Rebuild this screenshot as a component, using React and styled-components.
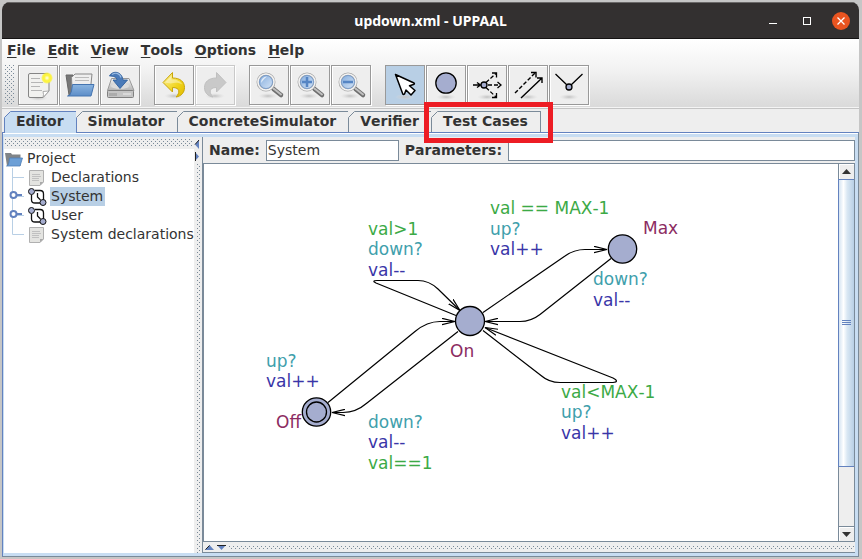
import React, { useState } from "react";
import styled, { createGlobalStyle, css } from "styled-components";

const ui = {
  steel: "#7a8a99",
  blue: "#6382bf",
  pale: "#c8ddf2",
  select: "#b8cfe5",
  panel: "#eeeeee",
  ink: "#333333",
};

const bumps = css`
  background-image: conic-gradient(from 270deg at 1px 1px, ${ui.steel} 90deg, transparent 0),
    conic-gradient(from 270deg at 1px 1px, ${ui.steel} 90deg, transparent 0);
  background-size: 4px 4px;
  background-position: 0 0, 2px 2px;
`;

const GlobalStyle = createGlobalStyle`
  * { box-sizing: border-box; }
  body {
    margin: 0;
    background: #c6c6c6;
    color: ${ui.ink};
    font: 14px/18px "DejaVu Sans", sans-serif;
    font-kerning: none;
  }
  button, input {
    font: inherit;
    font-kerning: none;
    color: inherit;
    padding: 0;
    margin: 0;
    border-radius: 0;
  }
`;

const Desktop = styled.div`
  height: 100vh;
  display: flex;
  padding: 2px 3px 2px 2px;
`;
const Window = styled.div`
  flex: 1;
  min-width: 0;
  display: flex;
  flex-direction: column;
  border-radius: 8px 8px 0 0;
  overflow: hidden;
  background: ${ui.panel};
`;

const TitleBar = styled.header`
  height: 37px;
  flex: none;
  display: grid;
  grid-template-columns: 1fr auto 1fr;
  align-items: center;
  padding: 0 9px;
  background: #333030;
  border-top: 1px solid #6a6868;
  border-bottom: 1px solid #151313;
  color: #fff;
`;
const Title = styled.h1`
  grid-column: 2;
  margin: 0;
  font: bold 14px/20px "Noto Sans", sans-serif;
`;
const WindowButtons = styled.div`
  display: flex;
  gap: 16px;
  justify-content: flex-end;
`;
const WindowButton = styled.button`
  width: 18px;
  height: 18px;
  border: 0;
  border-radius: 50%;
  background: ${(p) => (p.$close ? "#e95420" : "transparent")};
  svg { display: block; }
`;

const Chrome = styled.div`
  flex: none;
  background: linear-gradient(#ffffff, #f2f2f2 45%, #d9d9d9);
  box-shadow: inset 0 -1px 0 #f4f4f4;
  border-bottom: 1px solid #c4c4c4;
`;
const MenuBar = styled.nav`
  display: flex;
  gap: 12px;
  height: 25px;
  padding: 2px 5px 0;
`;
const MenuItem = styled.button`
  height: 18px;
  border: 0;
  background: none;
  font-weight: bold;
  line-height: 18px;
`;
const Hot = styled.span`
  text-decoration: underline;
  text-underline-offset: 2px;
  text-decoration-thickness: 1px;
`;
const Toolbar = styled.div`
  display: flex;
  gap: 14px;
  height: 44px;
  padding: 1px 3px 3px;
`;
const Grip = styled.div`
  width: 10px;
  height: 40px;
  margin-right: -11px;
  ${bumps}
`;
const ToolGroup = styled.div`
  display: flex;
  gap: 1px;
`;
const Tool = styled.button`
  width: 40px;
  height: 40px;
  border: 1px solid ${(p) => (p.disabled ? "#c9c9c9" : "#999999")};
  background: ${(p) => (p.$on ? ui.select : ui.panel)};
  box-shadow: ${(p) => (p.$on ? "1px 1px 0 #fff" : "1px 1px 0 #fff, inset 1px 1px 0 #fff")};
  svg { display: block; }
`;

const Tabs = styled.div`
  flex: none;
  display: flex;
  height: 24px;
  padding: 2px 2px 0 2px;
  border-bottom: 1px solid ${ui.blue};
`;
const Tab = styled.button`
  position: relative;
  height: ${(p) => (p.$on ? "22px" : "21px")};
  padding: ${(p) => (p.$on ? "0 12px 3px 11px" : "0 12px 2px 11px")};
  border: 1px solid ${(p) => (p.$on ? ui.blue : ui.steel)};
  border-bottom: 0;
  border-left-width: ${(p) => (p.$on ? "1px" : "0")};
  background: ${(p) => (p.$on ? ui.pale : ui.panel)};
  font-weight: bold;
  line-height: 18px;
  text-align: left;
`;
const CutCorner = styled.svg`
  position: absolute;
  left: -1px;
  top: -1px;
`;
const Highlight = styled.span`
  position: absolute;
  inset: -10px -13px -11px -8px;
  border: 5px solid #ed1c24;
  pointer-events: none;
  z-index: 2;
`;

const Content = styled.div`
  flex: 1;
  min-height: 0;
  display: grid;
  grid-template-columns: 190px 8px 1fr;
  padding: 4px 3px 3px 1px;
  background: ${ui.pale};
  border: solid ${ui.steel};
  border-width: 0 1px 1px 1px;
  border-left-color: ${ui.blue};
  box-shadow: inset 0 1px 0 #fff;
`;
const Sidebar = styled.aside`
  display: flex;
  flex-direction: column;
  min-height: 0;
  background: #fff;
`;
const SideGrip = styled.div`
  height: 12px;
  background-color: ${ui.panel};
  padding: 2px 1px;
  &::before {
    content: "";
    display: block;
    height: 8px;
    ${bumps}
  }
`;
const Divider = styled.div`
  display: flex;
  flex-direction: column;
  gap: 3px;
  padding-top: 3px;
  background: ${ui.panel};
  svg { display: block; flex: none; }
`;
const DividerBumps = styled.div`
  flex: 1;
  width: 4px;
  margin-left: 3px;
  ${bumps}
`;

const Tree = styled.ul`
  list-style: none;
  margin: 0;
  padding: 0;
`;
const TreeRow = styled.li`
  display: flex;
  align-items: center;
  height: 19px;
  white-space: nowrap;
`;
const Branch = styled.svg`
  flex: none;
  display: block;
`;
const NodeIcon = styled.svg`
  flex: none;
  display: block;
`;
const NodeLabel = styled.span`
  margin-left: 3px;
  padding: 0 2px 0 1px;
  line-height: 19px;
  background: ${(p) => (p.$on ? ui.select : "transparent")};
`;

const EditorPane = styled.main`
  display: flex;
  flex-direction: column;
  min-width: 0;
  min-height: 0;
  background: ${ui.panel};
  border-left: 1px solid ${ui.steel};
  border-bottom: 1px solid ${ui.steel};
`;
const Form = styled.form`
  flex: none;
  display: flex;
  align-items: center;
  height: 26px;
  padding-left: 6px;
`;
const FieldLabel = styled.label`
  font-weight: bold;
  margin-right: 6px;
`;
const Field = styled.input`
  height: 21px;
  min-width: 0;
  flex: ${(p) => (p.$grow ? "1" : "0 0 133px")};
  margin-right: ${(p) => (p.$grow ? "0" : "6px")};
  padding: 0 1px;
  border: 1px solid ${ui.steel};
  background: #fff;
  outline: 0;
`;
const CanvasRow = styled.div`
  flex: 1;
  min-height: 0;
  display: flex;
  background: #fff;
  border: 1px solid ${ui.steel};
  margin-bottom: 1px;
`;
const Canvas = styled.div`
  flex: 1;
  min-width: 0;
  overflow: hidden;
  svg { display: block; }
  text { font: 17px "DejaVu Sans", sans-serif; font-kerning: none; }
`;
const ScrollBar = styled.div`
  flex: none;
  width: 16px;
  display: flex;
  flex-direction: column;
  background: ${ui.panel};
  border-left: 1px solid ${ui.steel};
`;
const ScrollButton = styled.button`
  height: 15px;
  border: 0;
  background: ${ui.panel};
  box-shadow: inset 1px 1px 0 #fff;
  border-top: ${(p) => (p.$down ? `1px solid ${ui.steel}` : "0")};
  svg { display: block; margin: 0 auto; }
`;
const Track = styled.div`
  flex: 1;
  display: flex;
  flex-direction: column;
`;
const Thumb = styled.div`
  flex: 0 0 83%;
  display: flex;
  align-items: center;
  justify-content: center;
  margin-left: -1px;
  border: 1px solid ${ui.blue};
  border-right: 0;
  background: linear-gradient(90deg, #d5e4f2, #ffffff 30%, #d9e7f3 55%, #b8cfe5);
`;
const BottomDivider = styled.div`
  flex: none;
  display: flex;
  align-items: center;
  gap: 3px;
  height: 9px;
  padding-left: 2px;
  svg { display: block; flex: none; }
`;
const BottomBumps = styled.div`
  flex: 1;
  height: 4px;
  ${bumps}
`;

const Shadow = ({ cx = 19, cy = 31 }) => (
  <ellipse cx={cx} cy={cy} rx="10" ry="3" fill="url(#soft)" />
);

const GlyphPaints = () => (
  <svg width="0" height="0" aria-hidden="true">
    <defs>
      <radialGradient id="soft">
        <stop offset="0" stopColor="#c0c0c0" />
        <stop offset="1" stopColor="#dddddd" stopOpacity="0" />
      </radialGradient>
      <radialGradient id="sun">
        <stop offset="0" stopColor="#fffff0" />
        <stop offset="0.45" stopColor="#fcf440" />
        <stop offset="0.7" stopColor="#fcf340" />
        <stop offset="1" stopColor="#fff600" stopOpacity="0" />
      </radialGradient>
      <linearGradient id="folder" x2="0" y2="1">
        <stop offset="0" stopColor="#8ab4e0" />
        <stop offset="1" stopColor="#5c8dc8" />
      </linearGradient>
      <linearGradient id="lens" x2="1" y2="1">
        <stop offset="0" stopColor="#7fa9dc" />
        <stop offset="1" stopColor="#dce9f8" />
      </linearGradient>
      <linearGradient id="metal" x2="0" y2="1">
        <stop offset="0" stopColor="#f4f4f4" />
        <stop offset="1" stopColor="#b4b4b4" />
      </linearGradient>
      <linearGradient id="gold" x2="1" y2="1">
        <stop offset="0" stopColor="#fdf2a0" />
        <stop offset="0.6" stopColor="#f0d41c" />
        <stop offset="1" stopColor="#e0b800" />
      </linearGradient>
    </defs>
  </svg>
);

const Glyph = ({ children }) => (
  <svg width="38" height="38" viewBox="0 0 38 38" fill="none" aria-hidden="true">
    {children}
  </svg>
);

const NewIcon = () => (
  <Glyph>
    <Shadow cy={32} />
    <path d="M11 7.500h17q2 0 2 2V25l-6 6.500H11q-1.500 0-1.500-1.500V9q0-1.500 1.500-1.500Z" fill="#f1f1ef" stroke="#858585" />
    <path d="M30 25l-6 6.500q1-3 0-6Z" fill="#fff" stroke="#999" strokeWidth=".8" />
    <path d="M12 12.500h9M12 16.500h12M12 20.500h9M12 24.500h11" stroke="#b5b5b5" />
    <circle cx="28" cy="12" r="6" fill="url(#sun)" />
  </Glyph>
);
const OpenIcon = () => (
  <Glyph>
    <path d="M6 9h7l1 2h14v18H9Z" fill="#777" stroke="#666" />
    <path d="M11.500 11.500 15 8h17l-1.500 15H12Z" fill="#eee" stroke="#888" />
    <path d="M15 11.500h14M15 14.500h14" stroke="#bbb" />
    <path d="M12.500 18.500h21.500l-3 11.500H7.500q3 0 4-5Z" fill="url(#folder)" stroke="#4474b0" />
  </Glyph>
);
const SaveIcon = () => (
  <Glyph>
    <path d="M10.500 12.500h17.500l5 12H6.500Z" fill="url(#metal)" stroke="#999" />
    <ellipse cx="19" cy="20" rx="9" ry="3" fill="#dcdcdc" />
    <rect x="6.500" y="24.500" width="26" height="7" rx="1" fill="#c4c4c4" stroke="#808080" />
    <path d="M9 27v3M11 27v3M13 27v3M15 27v3" stroke="#888" strokeWidth=".8" />
    <path d="M22 28h8" stroke="#eee" />
    <path d="M8.500 10c2-5 12-6 13.500 4h4.500L19 22.500 12 14h4c0-3-4-4-7.500-4Z" fill="#4a7ab8" stroke="#30609c" strokeWidth=".9" />
    <path d="M11 8.500c4-2.500 8-1 9 3" stroke="#9dbde2" strokeWidth="1.200" />
  </Glyph>
);
const turn = "M8 16.500 17.500 6.500v5.500c8 0 12 4 12 9.500 0 5-3 8.500-8.500 9.500 4-4 4.500-9.500-3.500-9.500V26Z";
const UndoIcon = () => (
  <Glyph>
    <Shadow cy={30} />
    <path d={turn} fill="url(#gold)" stroke="#c9a60a" />
    <path d="M10 16.500l6.500-7v4c6 0 9 2 11 5-4-2-7-2-12-1Z" fill="#fff" opacity=".4" />
  </Glyph>
);
const RedoIcon = () => (
  <Glyph>
    <Shadow cy={30} />
    <path d={turn} transform="translate(38 0) scale(-1 1)" fill="#c9c9c9" stroke="#c0c0c0" />
  </Glyph>
);
const ZoomIcon = ({ sign }) => (
  <Glyph>
    <Shadow cx={18} cy={30} />
    <path d="M23.500 23 31 29" stroke="#6f6f6f" strokeWidth="4.500" strokeLinecap="round" />
    <path d="M23.500 22.500 31 28.500" stroke="#c0c0c0" strokeWidth="2" strokeLinecap="round" />
    <circle cx="16" cy="16" r="8" fill="url(#lens)" stroke="#aaa" strokeWidth="3" />
    <circle cx="16" cy="16" r="8" stroke="#f4f4f4" strokeWidth="1.500" />
    <circle cx="16" cy="16" r="6.500" stroke="#6c96cc" strokeWidth=".8" />
    {!sign && <path d="M11 17q0-6 6-6.500-3 2-6 6.500Z" fill="#fff" opacity=".7" />}
    {sign && <path d="M11 16h10" stroke="#5585c4" strokeWidth="2.500" />}
    {sign === "+" && <path d="M16 11v10" stroke="#5585c4" strokeWidth="2.500" />}
  </Glyph>
);
const PointerIcon = () => (
  <Glyph>
    <Shadow cy={31} />
    <path
      d="M9.500 8.500 28 17q1 1-.5 1.500l-4 1.200 5.500 4.800-4 4.500-5-5-1.500 4q-1 1-1.700 0Z"
      fill="#fff" stroke="#000" strokeWidth="1.500" strokeLinejoin="round"
    />
  </Glyph>
);
const LocationIcon = () => (
  <Glyph>
    <Shadow cy={31} />
    <circle cx="19" cy="17" r="10.200" fill="#a5adcf" stroke="#000" strokeWidth="1.300" />
  </Glyph>
);
const BranchIcon = () => (
  <Glyph>
    <Shadow cy={31} />
    <g stroke="#000" strokeWidth="1.300">
      <path d="M5 19h7M9 16.500l3.500 2.500L9 21.500M29.500 16l3.500 3-3.500 3M24 7h4.500v4.500M24 31.500h4.500V27" />
      <path d="M20 19h12M18 16.500 28 7.500M18 21.500 28 31" strokeDasharray="4 2" />
      <circle cx="16" cy="19" r="3" fill="#a5adcf" />
    </g>
  </Glyph>
);
const EdgeIcon = () => (
  <Glyph>
    <Shadow cy={31} />
    <g stroke="#000" strokeWidth="1.400">
      <path d="M6 27 26 7" strokeDasharray="4 2" />
      <path d="M22 6.500h5v5M12 32 33 12M28 12h5v5" />
    </g>
  </Glyph>
);
const NailIcon = () => (
  <Glyph>
    <Shadow cy={31} />
    <g stroke="#000" strokeWidth="1.300">
      <path d="M5.500 8 17 19M21 19 32.500 8" />
      <circle cx="19" cy="21" r="3" fill="#a5adcf" />
    </g>
  </Glyph>
);

const toolGroups = [
  [["New", NewIcon], ["Open", OpenIcon], ["Save", SaveIcon]],
  [["Undo", UndoIcon], ["Redo", RedoIcon]],
  [["Zoom to fit", ZoomIcon], ["Zoom in", ZoomIcon, "+"], ["Zoom out", ZoomIcon, "-"]],
  [["Select", PointerIcon], ["Add location", LocationIcon], ["Add branch point", BranchIcon], ["Add edge", EdgeIcon], ["Add nail", NailIcon]],
];

const FolderIcon = () => (
  <NodeIcon width="19" height="18" viewBox="0 0 19 18">
    <path d="M1 3h6l1 1.500h8.500V16H3Z" fill="#808488" />
    <path d="M5.500 8H18.500l-2.500 8H2.500q2 0 2.500-4Z" fill="#6c9fd6" stroke="#4f7fb8" strokeWidth=".8" />
  </NodeIcon>
);
const PageIcon = () => (
  <NodeIcon width="19" height="18" viewBox="0 0 19 18">
    <path d="M1.500 1.500h14V13L12 16.500H1.500Z" fill="#e4e4e1" stroke="#b0b0b0" />
    <path d="M4 5.500h8M4 7.500h9M4 9.500h7M4 11.500h7" stroke="#c0c0c0" />
    <path d="M15.500 13 12 16.500V13Z" fill="#aaa" />
  </NodeIcon>
);
const TemplateIcon = () => (
  <NodeIcon width="19" height="18" viewBox="0 0 19 18" fill="none" stroke="#111">
    <path d="M7 2.500h5q3.500 0 3.500 3.500v6M3.500 7v5q0 3 3.500 3h5" strokeWidth="1.300" />
    <path d="M9.500 5v4l3 3" strokeWidth="1.300" />
    <circle cx="3.500" cy="3.500" r="3" fill="#a5adcf" />
    <circle cx="15" cy="14.500" r="3" fill="#a5adcf" />
  </NodeIcon>
);

const nodes = [
  { name: "Declarations", Icon: PageIcon },
  { name: "System", Icon: TemplateIcon, handle: true },
  { name: "User", Icon: TemplateIcon, handle: true },
  { name: "System declarations", Icon: PageIcon, last: true },
];

const TreeBranch = ({ handle, last }) => (
  <Branch width="24" height="19" viewBox="0 0 24 19" fill="none">
    <path d={last ? "M8.500 0V9.500H20" : "M8.500 0V19M8.500 9.500H20"} stroke={ui.select} />
    {handle && (
      <g stroke={ui.blue} strokeWidth="2">
        <path d="M12 8h6" />
        <circle cx="9.500" cy="8" r="3" fill="#fff" />
      </g>
    )}
  </Branch>
);

const colors = { guard: "#3caa46", sync: "#3fa0ac", update: "#3a36a8", name: "#8c2c62" };
const labels = [
  [368, 235, "guard", "val>1"], [368, 255, "sync", "down?"], [368, 276, "update", "val--"],
  [490, 214, "guard", "val == MAX-1"], [490, 235, "sync", "up?"], [490, 255, "update", "val++"],
  [593, 285, "sync", "down?"], [593, 306, "update", "val--"],
  [266, 367, "sync", "up?"], [266, 387, "update", "val++"],
  [368, 428, "sync", "down?"], [368, 448, "update", "val--"], [368, 469, "guard", "val==1"],
  [561, 398, "guard", "val<MAX-1"], [561, 418, "sync", "up?"], [561, 439, "update", "val++"],
  [643, 234, "name", "Max"], [450, 357, "name", "On"], [276, 428, "name", "Off"],
];
const edges = [
  "M328 402.500 415 331.500Q427 321.500 440 321.500H455",
  "M458 331.500 367 403Q356 412.500 343 412.500H332",
  "M456 315.500 376 283Q371 280.500 377 280.500H418Q429 280.500 438 289L460 310.500",
  "M483 312.500 565 256Q574 249.500 585 249.500H607",
  "M611 258.500 540 314.500Q531 321.500 520 321.500H485",
  "M483 330.500 541 375.500Q549 382.500 560 382.500H613Q620 381.500 613 378L485 327.500",
];

const Diagram = () => (
  <svg width="634" height="377" viewBox="204 164 634 377" fill="none" role="img" aria-label="Automaton">
    <defs>
      <marker id="tip" markerUnits="userSpaceOnUse" markerWidth="14" markerHeight="8" refX="13" refY="4" orient="auto">
        <path d="M0 .8 13 4 0 7.200" stroke="#000" strokeWidth="1.200" fill="none" />
      </marker>
    </defs>
    {edges.map((d) => (
      <path key={d} d={d} stroke="#000" strokeWidth="1.200" markerEnd="url(#tip)" />
    ))}
    <g fill="#a5adcf" stroke="#000" strokeWidth="1.300">
      <circle cx="316.500" cy="412" r="14.200" />
      <circle cx="316.500" cy="412" r="10" />
      <circle cx="470" cy="321" r="14.500" />
      <circle cx="622.500" cy="249" r="14.200" />
    </g>
    {labels.map(([x, y, kind, text]) => (
      <text key={`${x}-${y}`} x={x} y={y} fill={colors[kind]}>{text}</text>
    ))}
  </svg>
);

const tabs = ["Editor", "Simulator", "ConcreteSimulator", "Verifier", "Test Cases"];

export default function App() {
  const [name, setName] = useState("System");
  const [params, setParams] = useState("");
  return (
    <Desktop>
      <GlobalStyle />
      <GlyphPaints />
      <Window>
        <TitleBar>
          <Title>updown.xml - UPPAAL</Title>
          <WindowButtons>
            <WindowButton aria-label="Minimize">
              <svg width="18" height="18"><path d="M5 11.500h8" stroke="#fff" /></svg>
            </WindowButton>
            <WindowButton aria-label="Maximize">
              <svg width="18" height="18"><rect x="5.500" y="5.500" width="7" height="7" fill="none" stroke="#fff" /></svg>
            </WindowButton>
            <WindowButton $close aria-label="Close">
              <svg width="18" height="18"><path d="M5.500 5.500l7 7M12.500 5.500l-7 7" stroke="#fff" strokeWidth="1.300" /></svg>
            </WindowButton>
          </WindowButtons>
        </TitleBar>

        <Chrome>
          <MenuBar>
            {["File", "Edit", "View", "Tools", "Options", "Help"].map((m) => (
              <MenuItem key={m}><Hot>{m[0]}</Hot>{m.slice(1)}</MenuItem>
            ))}
          </MenuBar>
          <Toolbar>
            <Grip />
            {toolGroups.map((group) => (
              <ToolGroup key={group[0][0]}>
                {group.map(([label, Icon, sign]) => (
                  <Tool key={label} aria-label={label} disabled={label === "Redo"} $on={label === "Select"}>
                    <Icon sign={sign} />
                  </Tool>
                ))}
              </ToolGroup>
            ))}
          </Toolbar>
        </Chrome>

        <Tabs role="tablist">
          {tabs.map((t, i) => (
            <Tab key={t} role="tab" aria-selected={i === 0} $on={i === 0}>
              <CutCorner width="7" height="7">
                <path d="M0 0H7L0 7Z" fill={ui.panel} />
                <path d="M.5 6.500 6.500.5" stroke={i === 0 ? ui.blue : ui.steel} />
              </CutCorner>
              {t}
              {t === "Test Cases" && <Highlight />}
            </Tab>
          ))}
        </Tabs>

        <Content>
          <Sidebar>
            <SideGrip />
            <Tree>
              <TreeRow><FolderIcon /><NodeLabel>Project</NodeLabel></TreeRow>
              {nodes.map(({ name: n, Icon, handle, last }) => (
                <TreeRow key={n}>
                  <TreeBranch handle={handle} last={last} />
                  <Icon />
                  <NodeLabel $on={n === "System"}>{n}</NodeLabel>
                </TreeRow>
              ))}
            </Tree>
          </Sidebar>
          <Divider>
            <svg width="8" height="9"><path d="M5 0v9L1 4.500Z" fill={ui.blue} /><path d="M5 0 1 4.500" stroke="#222" /></svg>
            <svg width="8" height="9"><path d="M1 0v9L5 4.500Z" fill={ui.blue} /><path d="M1.500 0v9" stroke="#222" /></svg>
            <DividerBumps />
          </Divider>
          <EditorPane>
            <Form onSubmit={(e) => e.preventDefault()}>
              <FieldLabel htmlFor="name">Name:</FieldLabel>
              <Field id="name" value={name} onChange={(e) => setName(e.target.value)} />
              <FieldLabel htmlFor="params">Parameters:</FieldLabel>
              <Field id="params" $grow value={params} onChange={(e) => setParams(e.target.value)} />
            </Form>
            <CanvasRow>
              <Canvas><Diagram /></Canvas>
              <ScrollBar>
                <ScrollButton aria-label="Scroll up">
                  <svg width="9" height="5"><path d="M0 5 4.500 0 9 5Z" fill={ui.ink} /></svg>
                </ScrollButton>
                <Track>
                  <Thumb>
                    <svg width="10" height="6"><path d="M0 .5h9M0 2.500h9M0 4.500h9" stroke={ui.blue} /></svg>
                  </Thumb>
                </Track>
                <ScrollButton $down aria-label="Scroll down">
                  <svg width="9" height="5"><path d="M0 0h9L4.500 5Z" fill={ui.ink} /></svg>
                </ScrollButton>
              </ScrollBar>
            </CanvasRow>
            <BottomDivider>
              <svg width="9" height="5"><path d="M0 5 4.500 0 9 5Z" fill={ui.blue} /><path d="M.5 4.500 4.500.5" stroke="#222" /></svg>
              <svg width="9" height="5"><path d="M0 0h9L4.500 5Z" fill={ui.blue} /><path d="M0 .5h9" stroke="#222" /></svg>
              <BottomBumps />
            </BottomDivider>
          </EditorPane>
        </Content>
      </Window>
    </Desktop>
  );
}
